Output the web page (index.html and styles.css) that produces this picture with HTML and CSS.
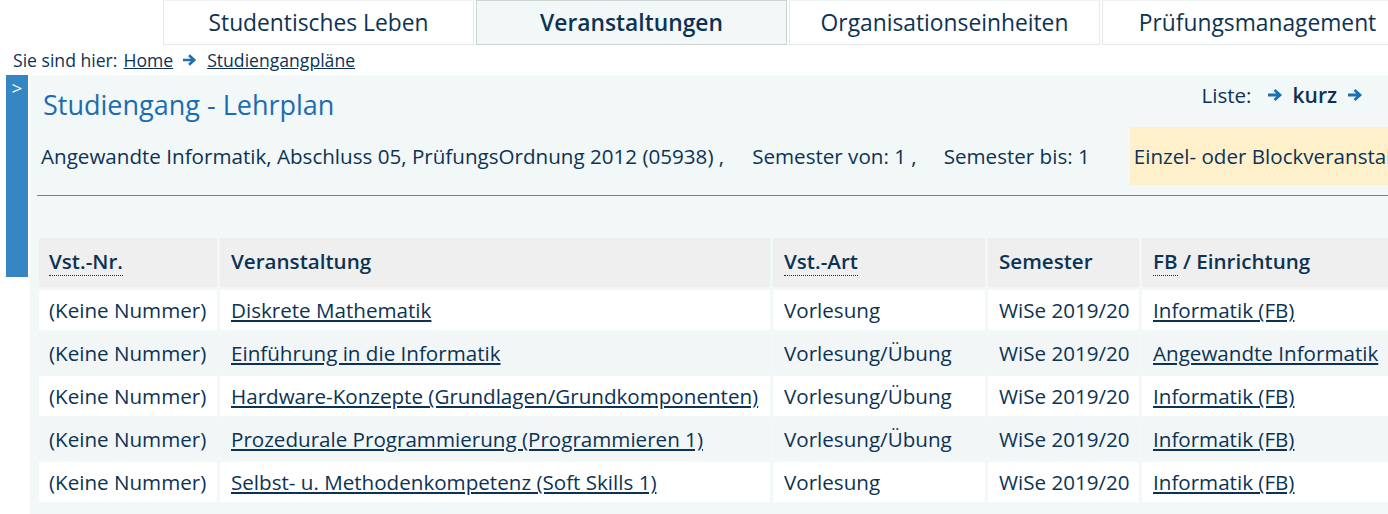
FILE: index.html
```html
<!DOCTYPE html>
<html lang="de">
<head>
<meta charset="utf-8">
<title>Studiengang - Lehrplan</title>
<link rel="stylesheet" href="styles.css">
</head>
<body>
<nav class="topnav">
  <a class="tab">Studentisches Leben</a>
  <a class="tab active">Veranstaltungen</a>
  <a class="tab">Organisationseinheiten</a>
  <a class="tab">Prüfungsmanagement</a>
</nav>
<div class="crumbs">
  <span>Sie sind hier:</span>
  <a href="#">Home</a>
  <svg class="arrow" viewBox="0 0 16 14" width="15" height="14"><path d="M1 7 H12 M7.5 2 L13 7 L7.5 12" fill="none" stroke="#1d6eb4" stroke-width="2.8"/></svg>
  <a href="#">Studiengangpläne</a>
</div>
<div class="main">
  <div class="sidetab"><span>&gt;</span></div>
  <div class="panel">
    <div class="head">
      <h1>Studiengang - Lehrplan</h1>
      <div class="liste">
        <span class="lbl">Liste:</span>
        <svg class="arrow a1" viewBox="0 0 16 14" width="16" height="14"><path d="M1 7 H12 M7.5 2 L13 7 L7.5 12" fill="none" stroke="#1d6eb4" stroke-width="2.8"/></svg>
        <b>kurz</b>
        <svg class="arrow a2" viewBox="0 0 16 14" width="16" height="14"><path d="M1 7 H12 M7.5 2 L13 7 L7.5 12" fill="none" stroke="#1d6eb4" stroke-width="2.8"/></svg>
      </div>
    </div>
    <div class="info">
      <span class="i1">Angewandte Informatik, Abschluss 05, PrüfungsOrdnung 2012 (05938) ,</span>
      <span class="i2">Semester von: 1 ,</span>
      <span class="i3">Semester bis: 1</span>
      <span class="note">Einzel- oder Blockveranstaltung</span>
    </div>
    <hr class="rule">
    <table class="plan">
      <thead>
        <tr>
          <th class="c1"><abbr>Vst.-Nr.</abbr></th>
          <th class="c2">Veranstaltung</th>
          <th class="c3"><abbr>Vst.-Art</abbr></th>
          <th class="c4">Semester</th>
          <th class="c5"><abbr>FB</abbr> / Einrichtung</th>
        </tr>
      </thead>
      <tbody>
        <tr><td>(Keine Nummer)</td><td><a href="#">Diskrete Mathematik</a></td><td>Vorlesung</td><td>WiSe 2019/20</td><td><a href="#">Informatik (FB)</a></td></tr>
        <tr><td>(Keine Nummer)</td><td><a href="#">Einführung in die Informatik</a></td><td>Vorlesung/Übung</td><td>WiSe 2019/20</td><td><a href="#">Angewandte Informatik</a></td></tr>
        <tr><td>(Keine Nummer)</td><td><a href="#">Hardware-Konzepte (Grundlagen/Grundkomponenten)</a></td><td>Vorlesung/Übung</td><td>WiSe 2019/20</td><td><a href="#">Informatik (FB)</a></td></tr>
        <tr><td>(Keine Nummer)</td><td><a href="#">Prozedurale Programmierung (Programmieren 1)</a></td><td>Vorlesung/Übung</td><td>WiSe 2019/20</td><td><a href="#">Informatik (FB)</a></td></tr>
        <tr><td>(Keine Nummer)</td><td><a href="#">Selbst- u. Methodenkompetenz (Soft Skills 1)</a></td><td>Vorlesung</td><td>WiSe 2019/20</td><td><a href="#">Informatik (FB)</a></td></tr>
      </tbody>
    </table>
  </div>
</div>
</body>
</html>
```

FILE: styles.css
```css
html, body {
  margin: 0;
  padding: 0;
  height: 100%;
  overflow: hidden;
}
body {
  font-family: "Open Sans", "DejaVu Sans", sans-serif;
  color: #0c3354;
  background: #fff;
  width: 1388px;
}
a { color: #0c3354; }

.topnav {
  display: flex;
  gap: 2px;
  margin-left: 163px;
  height: 45px;
}
.tab {
  flex: 0 0 311px;
  box-sizing: border-box;
  height: 45px;
  border: 1px solid #e4eaea;
  border-top-color: #eef2f2;
  display: flex;
  align-items: center;
  justify-content: center;
  font-size: 22.8px;
  color: #0c3354;
  text-decoration: none;
  padding-bottom: 1px;
}
.tab.active {
  background: #f2f7f7;
  border-color: #cdd3d3;
  font-weight: 600;
}

.crumbs {
  display: flex;
  align-items: center;
  height: 30px;
  padding-left: 13px;
  font-size: 17.6px;
  gap: 6px;
}
.crumbs .arrow { margin: 0 4px 0 3px; }

.main {
  display: flex;
  margin-left: 6px;
  gap: 2px;
  height: 439px;
}
.sidetab {
  flex: 0 0 22px;
  height: 202px;
  background: #3586c2;
  color: #fff;
  font-size: 19px;
  text-align: center;
  line-height: 26px;
}
.panel {
  flex: 1;
  background: #f2f7f7;
  overflow: hidden;
  padding: 0 0 0 7px;
  min-width: 0;
}
.head {
  display: flex;
  justify-content: space-between;
  align-items: flex-start;
  padding: 11px 0 0 6px;
  height: 41px;
}
h1 {
  margin: 0;
  font-size: 27px;
  font-weight: 400;
  color: #1b6cb2;
  line-height: 38px;
}
.liste {
  display: flex;
  align-items: center;
  font-size: 20.6px;
  padding-right: 25px;
  margin-top: -5px;
}
.liste .lbl { margin-right: 15px; }
.liste .a1 { margin-right: 10px; }
.liste .a2 { margin-left: 10px; }
.liste b { font-weight: 600; font-size: 21px; }

.info {
  display: flex;
  align-items: center;
  white-space: nowrap;
  font-size: 20.6px;
  height: 58px;
  padding-left: 4px;
}
.i1 { margin-right: 28px; }
.i2 { margin-right: 27px; }
.i3 { margin-right: 40px; }
.note {
  background: #fff0cc;
  height: 58px;
  display: flex;
  align-items: center;
  padding: 0 30px 0 4px;
}

.rule {
  border: 0;
  border-top: 1px solid #7b7f80;
  margin: 10px 0 0 0;
}

.plan {
  margin-top: 39px;
  margin-left: -1px;
  border-collapse: separate;
  border-spacing: 3px;
  white-space: nowrap;
  font-size: 20.6px;
  table-layout: fixed;
  width: 1400px;
}
.plan .c1 { width: 158px; }
.plan .c2 { width: 530px; }
.plan .c3 { width: 192px; }
.plan .c4 { width: 131px; }
.plan .c5 { width: 339px; }
.plan th {
  background: #efefef;
  text-align: left;
  font-weight: 600;
  height: 45px;
  padding: 0 10px 4px;
  font-size: 20.6px;
}
.plan td {
  height: 40px;
  padding: 0 10px;
  background: #fff;
}
.plan th:first-child, .plan td:first-child { padding-left: 10px; }
.plan th:not(:first-child), .plan td:not(:first-child) { padding-left: 11px; padding-right: 9px; }
.plan tbody tr:nth-child(even) td { background: #f2f6f7; }
abbr {
  text-decoration: none;
  border-bottom: 1.5px dotted #0c3354;
}
```
